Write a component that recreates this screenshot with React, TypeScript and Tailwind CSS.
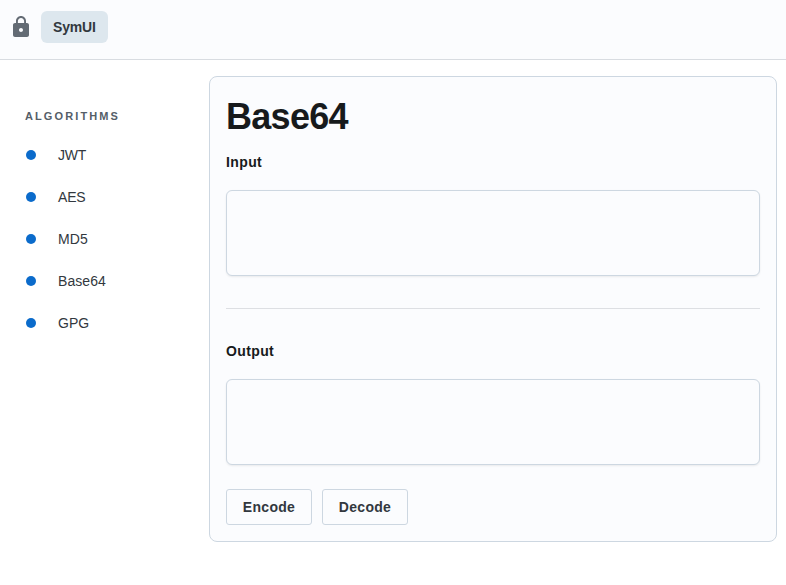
import { MdLock } from "react-icons/md";

const algorithms = [
  { name: "JWT", tracking: "tracking-[-0.2px]" },
  { name: "AES", tracking: "tracking-[-0.2px]" },
  { name: "MD5", tracking: "tracking-[0.15px]" },
  { name: "Base64", tracking: "tracking-[0.08px]" },
  { name: "GPG", tracking: "tracking-normal" },
];

function Field({ label }: { label: string }) {
  return (
    <label className="block">
      <span className="block text-sm leading-[21px] font-bold tracking-[0.38px] text-[#171a1c]">{label}</span>
      <textarea className="mt-[17px] block h-[86px] w-full resize-none rounded-md border border-[#cdd7e1] bg-[#fbfcfe] px-3 py-2 text-base shadow-[0_1px_2px_0_rgba(21,21,21,0.08)] outline-none" />
    </label>
  );
}

function ActionButton({ label }: { label: string }) {
  return (
    <button className="flex h-9 w-[86px] items-center justify-center rounded-[3px] border border-[#cdd7e1] text-sm leading-[21px] font-bold tracking-[0.3px] text-[#32383e]">
      {label}
    </button>
  );
}

export default function App() {
  return (
    <div className="flex h-[585px] flex-col overflow-hidden bg-white font-['Liberation_Sans',Arial,sans-serif]">
      <header className="flex h-[60px] shrink-0 items-start gap-2 border-b border-[#d8dce1] bg-[#fbfcfe] pt-[11px] pl-[9px]">
        <div className="flex h-8 items-center">
          <MdLock size={24} color="#636b74" />
        </div>
        <div className="flex h-8 w-[67px] items-center rounded-md bg-[#dde7ee] pl-3 text-sm font-bold tracking-[-0.2px] text-[#32383e]">
          SymUI
        </div>
      </header>
      <div className="flex flex-1">
        <nav className="w-[209px] shrink-0 pt-[46px] pl-[25px]">
          <h2 className="text-[11px] leading-5 font-bold tracking-[2.1px] text-[#555e68] uppercase">
            Algorithms
          </h2>
          <ul className="mt-2">
            {algorithms.map(({ name, tracking }) => (
              <li key={name} className="flex h-[42px] items-center gap-[22px] pl-px text-sm text-[#32383e]">
                <span className="size-[10px] rounded-full bg-[#0b6bcb]" />
                <span className={tracking}>{name}</span>
              </li>
            ))}
          </ul>
        </nav>
        <main className="mt-4 mr-[9px] h-[466px] flex-1 rounded-lg border border-[#cdd7e1] bg-[#fbfcfe] px-4 pt-4">
          <h1 className="text-4xl leading-[48px] font-bold tracking-[-0.72px] text-[#171a1c]">Base64</h1>
          <div className="mt-[11px]">
            <Field label="Input" />
          </div>
          <hr className="my-8 border-t border-[#dddfe3]" />
          <Field label="Output" />
          <div className="mt-6 flex gap-[10px]">
            <ActionButton label="Encode" />
            <ActionButton label="Decode" />
          </div>
        </main>
      </div>
    </div>
  );
}
